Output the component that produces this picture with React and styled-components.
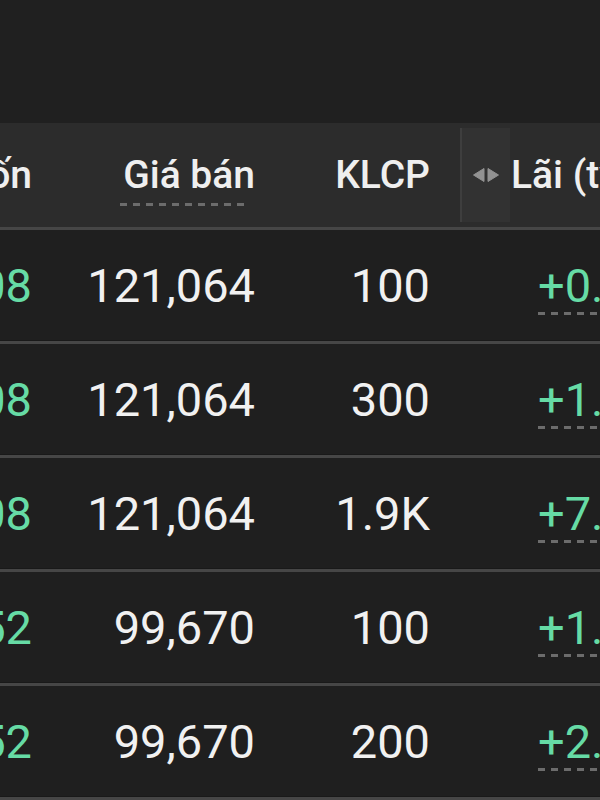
import React, { useLayoutEffect, useRef } from 'react';
import styled, { createGlobalStyle } from 'styled-components';

const Global = createGlobalStyle`
  html, body { margin: 0; padding: 0; background: #1f1f1f; overflow: hidden; }
  body { font-family: Roboto, "Noto Sans", "Liberation Sans", sans-serif; }
  #root { width: 600px; height: 800px; }
`;

const COLS = '248px 223px 175px 340px';

const Page = styled.div`
  width: 600px;
  height: 800px;
  background: #1f1f1f;
  display: flex;
  flex-direction: column;
  overflow: hidden;
`;

const TopBar = styled.div`
  height: 123px;
  flex: none;
  background: #202020;
`;

const Scroller = styled.div`
  overflow-x: auto;
  overflow-y: hidden;
  scrollbar-width: none;
  &::-webkit-scrollbar { display: none; }
`;

const Table = styled.div`
  width: max-content;
  display: flex;
  flex-direction: column;
`;

const HeaderRow = styled.div`
  display: grid;
  grid-template-columns: ${COLS};
  height: 104px;
  background: #2c2c2c;
  border-bottom: 3px solid #464646;
`;

const Row = styled.div`
  display: grid;
  grid-template-columns: ${COLS};
  height: 111px;
  background: #1f1f1f;
  border-bottom: 3px solid #464646;
  box-shadow: inset 0 -1px 0 #191919;
`;

const HeadCell = styled.div`
  display: flex;
  align-items: center;
  justify-content: ${p => (p.$left ? 'flex-start' : 'flex-end')};
  padding: 0 ${p => (p.$left ? '0' : '16px')} 0 ${p => (p.$left ? '14px' : '0')};
  font-size: 39px;
  font-weight: 500;
  color: #efefef;
  white-space: nowrap;
`;

const Cell = styled.div`
  display: flex;
  align-items: center;
  justify-content: ${p => (p.$left ? 'flex-start' : 'flex-end')};
  padding: 0 ${p => (p.$left ? '0' : '16px')} 0 ${p => (p.$left ? '92px' : '0')};
  font-size: 47px;
  font-weight: 400;
  color: ${p => (p.$green ? '#66dba5' : '#f1f1f1')};
  white-space: nowrap;
`;

const Label = styled.span`
  position: relative;
  line-height: 1;
  &::after {
    content: ${p => (p.$dashed ? '""' : 'none')};
    position: absolute;
    left: ${p => p.$dashLeft || '-3px'};
    right: ${p => p.$dashRight || '6px'};
    bottom: ${p => p.$offset || '-11px'};
    height: 3px;
    background: repeating-linear-gradient(to right, #6c6c6c 0 7px, transparent 7px 13px);
  }
`;

const Handle = styled.div`
  align-self: stretch;
  margin: 5px 1px 5px 0;
  width: 48px;
  flex: none;
  background: #323232;
  border-left: 2px solid #3e3e3e;
  display: flex;
  align-items: center;
  justify-content: center;
`;

const ArrowsIcon = () => (
  <svg width="28" height="16" viewBox="0 0 28 16">
    <path d="M12 1.5 L1.5 8 L12 14.5 Z" fill="#929292" stroke="#929292" strokeWidth="1" strokeLinejoin="round" />
    <path d="M16 1.5 L26.5 8 L16 14.5 Z" fill="#929292" stroke="#929292" strokeWidth="1" strokeLinejoin="round" />
  </svg>
);

const rows = [
  { cost: '120,408', sell: '121,064', qty: '100', gain: '+0.54%' },
  { cost: '120,408', sell: '121,064', qty: '300', gain: '+1.63%' },
  { cost: '120,408', sell: '121,064', qty: '1.9K', gain: '+7.12%' },
  { cost: '98,152', sell: '99,670', qty: '100', gain: '+1.52%' },
  { cost: '98,152', sell: '99,670', qty: '200', gain: '+2.04%' },
];

export default function App() {
  const ref = useRef(null);
  useLayoutEffect(() => {
    if (ref.current) ref.current.scrollLeft = 200;
  }, []);

  return (
    <>
      <Global />
      <Page>
        <TopBar />
        <Scroller ref={ref}>
          <Table>
            <HeaderRow>
              <HeadCell><Label>Giá vốn</Label></HeadCell>
              <HeadCell><Label $dashed>Giá bán</Label></HeadCell>
              <HeadCell><Label>KLCP</Label></HeadCell>
              <HeadCell $left>
                <Handle><ArrowsIcon /></Handle>
                <Label>Lãi (tỷ lệ)</Label>
              </HeadCell>
            </HeaderRow>
            {rows.map((r, i) => (
              <Row key={i}>
                <Cell $green><Label>{r.cost}</Label></Cell>
                <Cell><Label>{r.sell}</Label></Cell>
                <Cell><Label>{r.qty}</Label></Cell>
                <Cell $left $green>
                  <Label $dashed $offset="-6px" $dashLeft="0px" $dashRight="0px">{r.gain}</Label>
                </Cell>
              </Row>
            ))}
          </Table>
        </Scroller>
      </Page>
    </>
  );
}
